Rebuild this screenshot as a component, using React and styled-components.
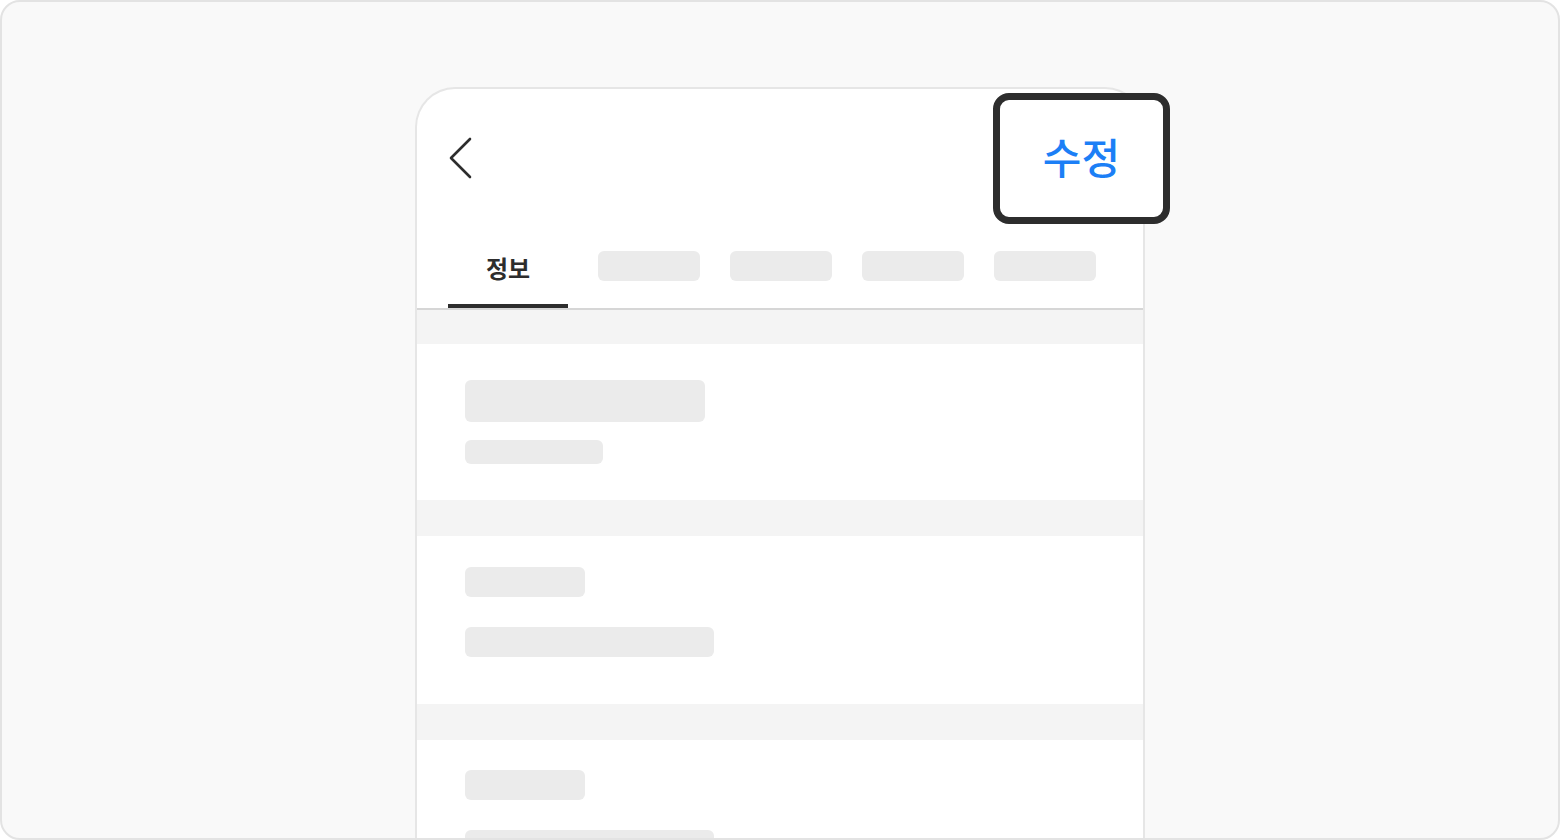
import React from 'react';
import styled, { createGlobalStyle } from 'styled-components';

const GlobalStyle = createGlobalStyle`
  * { box-sizing: border-box; }
  html, body { margin: 0; padding: 0; }
  body {
    font-family: "Noto Sans CJK KR", "Noto Sans", sans-serif;
    background: #ffffff;
  }
`

const Frame = styled.div`
  width: 1560px;
  height: 840px;
  border: 2px solid #e3e3e3;
  border-radius: 20px;
  background: #f9f9f9;
  overflow: hidden;
  display: flex;
  justify-content: center;
  align-items: flex-start;
  padding-top: 85px;
`

const Phone = styled.div`
  width: 730px;
  background: #ffffff;
  border: 2px solid #e6e6e6;
  border-bottom: none;
  border-radius: 40px 40px 0 0;
`

const Header = styled.div`
  height: 138px;
  display: flex;
  align-items: center;
  justify-content: space-between;
  padding-left: 32px;
`

const BackButton = styled.button`
  border: none;
  background: none;
  padding: 0;
  display: flex;
  cursor: pointer;
`

const EditButton = styled.button`
  width: 177px;
  height: 131px;
  margin-right: -27px;
  margin-top: 1px;
  padding: 0 0 6px 0;
  border: 7px solid #2d2d2d;
  border-radius: 16px;
  background: #ffffff;
  color: #1c7ff6;
  font-family: "Noto Sans CJK KR", sans-serif;
  font-size: 42px;
  font-weight: 500;
  line-height: 1;
  position: relative;
  z-index: 1;
  cursor: pointer;
`

const TabBar = styled.div`
  display: flex;
  align-items: flex-start;
  gap: 30px;
  padding: 24px 31px 0;
  border-bottom: 2px solid #d6d6d6;
`

const ActiveTab = styled.div`
  width: 120px;
  height: 57px;
  padding-top: 2px;
  text-align: center;
  font-size: 24px;
  font-weight: 700;
  line-height: 30px;
  color: #2d2d2d;
  border-bottom: 4px solid #2d2d2d;
`

const Skeleton = styled.div`
  width: ${p => p.$w}px;
  height: ${p => p.$h}px;
  border-radius: 6px;
  background: #ebebeb;
`

const Band = styled.div`
  height: ${p => p.$h || 36}px;
  background: #f4f4f4;
`

const Section = styled.div`
  display: flex;
  flex-direction: column;
  align-items: flex-start;
  gap: ${p => p.$gap}px;
  padding: ${p => p.$top}px 48px ${p => p.$bottom}px;
`

function Chevron() {
  return (
    <svg width="24" height="42" viewBox="0 0 24 42" fill="none">
      <path d="M21 2 L2 21 L21 40" stroke="#2d2d2d" strokeWidth="2.6" strokeLinecap="round" strokeLinejoin="round" />
    </svg>
  );
}

export default function App() {
  return (
    <>
      <GlobalStyle />
      <Frame>
        <Phone>
          <Header>
            <BackButton><Chevron /></BackButton>
            <EditButton>수정</EditButton>
          </Header>
          <TabBar>
            <ActiveTab>정보</ActiveTab>
            <Skeleton $w={102} $h={30} />
            <Skeleton $w={102} $h={30} />
            <Skeleton $w={102} $h={30} />
            <Skeleton $w={102} $h={30} />
          </TabBar>
          <Band $h={34} />
          <Section $gap={18} $top={36} $bottom={36}>
            <Skeleton $w={240} $h={42} />
            <Skeleton $w={138} $h={24} />
          </Section>
          <Band />
          <Section $gap={30} $top={31} $bottom={47}>
            <Skeleton $w={120} $h={30} />
            <Skeleton $w={249} $h={30} />
          </Section>
          <Band />
          <Section $gap={30} $top={30} $bottom={47}>
            <Skeleton $w={120} $h={30} />
            <Skeleton $w={249} $h={30} />
          </Section>
        </Phone>
      </Frame>
    </>
  );
}
